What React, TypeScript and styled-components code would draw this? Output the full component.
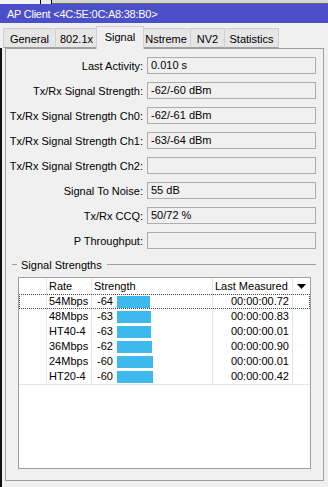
import styled, { createGlobalStyle } from "styled-components";

const GlobalStyle = createGlobalStyle`
  html, body {
    margin: 0;
    padding: 0;
    background: #f0f0f0;
  }
  body {
    font-family: "Liberation Sans", Arial, sans-serif;
    font-size: 11px;
    color: #000;
  }
`;

const tabs = [
  { name: "General", width: 53 },
  { name: "802.1x", width: 43 },
  { name: "Signal", width: 48 },
  { name: "Nstreme", width: 50 },
  { name: "NV2", width: 35 },
  { name: "Statistics", width: 55 },
];

const fields = [
  { label: "Last Activity:", value: "0.010 s" },
  { label: "Tx/Rx Signal Strength:", value: "-62/-60 dBm" },
  { label: "Tx/Rx Signal Strength Ch0:", value: "-62/-61 dBm" },
  { label: "Tx/Rx Signal Strength Ch1:", value: "-63/-64 dBm" },
  { label: "Tx/Rx Signal Strength Ch2:", value: "" },
  { label: "Signal To Noise:", value: "55 dB" },
  { label: "Tx/Rx CCQ:", value: "50/72 %" },
  { label: "P Throughput:", value: "" },
];

const rates = [
  { rate: "54Mbps", strength: -64, last: "00:00:00.72" },
  { rate: "48Mbps", strength: -63, last: "00:00:00.83" },
  { rate: "HT40-4", strength: -63, last: "00:00:00.01" },
  { rate: "36Mbps", strength: -62, last: "00:00:00.90" },
  { rate: "24Mbps", strength: -60, last: "00:00:00.01" },
  { rate: "HT20-4", strength: -60, last: "00:00:00.42" },
];

// bar length grows as the signal gets stronger
const barWidth = (dbm: number) => Math.round(33 + (dbm + 64) * 0.8);

const App = () => {
  return (
    <>
      <GlobalStyle />
      <Window>
        <TopStrip>
          <StripLight />
          <StripMark />
          <StripGap />
          <StripMark />
          <StripDark />
        </TopStrip>
        <TitleBar>AP Client &lt;4C:5E:0C:A8:38:B0&gt;</TitleBar>
        <TabRow>
          {tabs.map((t) => (
            <Tab key={t.name} $width={t.width} $active={t.name === "Signal"}>
              {t.name}
            </Tab>
          ))}
        </TabRow>
        <Body>
          <Edge />
          <Panel>
            <Form>
              {fields.map((f) => (
                <Field key={f.label}>
                  <Label>{f.label}</Label>
                  <Value>{f.value}</Value>
                </Field>
              ))}
            </Form>
            <GroupTitle>
              <Dash />
              <GroupText>Signal Strengths</GroupText>
              <GroupLine />
            </GroupTitle>
            <List>
              <HeaderRow>
                <Cell />
                <HeadCell>Rate</HeadCell>
                <HeadCell>Strength</HeadCell>
                <HeadCell>Last Measured</HeadCell>
                <ArrowCell>
                  <svg width="9" height="5" viewBox="0 0 9 5">
                    <polygon points="0,0 9,0 4.5,5" fill="#000" />
                  </svg>
                </ArrowCell>
              </HeaderRow>
              <Rows>
                {rates.map((r, i) => (
                  <Row key={r.rate} $focused={i === 0}>
                    <Cell />
                    <RateCell>{r.rate}</RateCell>
                    <StrengthCell>
                      <Dbm>{r.strength}</Dbm>
                      <Bar style={{ width: barWidth(r.strength) }} />
                    </StrengthCell>
                    <TimeCell>{r.last}</TimeCell>
                    <LastCell />
                  </Row>
                ))}
              </Rows>
            </List>
          </Panel>
        </Body>
      </Window>
    </>
  );
};

export default App;

const Window = styled.div`
  width: 328px;
  height: 487px;
  overflow: hidden;
  background: #f0f0f0;
`;

const TopStrip = styled.div`
  display: flex;
  height: 4px;
`;

const StripLight = styled.div`
  width: 40px;
  background: #f4f4f4;
`;

const StripMark = styled.div`
  width: 1px;
  background: #111;
`;

const StripGap = styled.div`
  width: 10px;
  background: #e8e8e8;
`;

const StripDark = styled.div`
  flex: 1;
  background: #d4d4d4;
  border-bottom: 1px solid #6a6a6a;
`;

const TitleBar = styled.div`
  height: 19px;
  display: flex;
  align-items: center;
  padding-left: 7px;
  background: #4c50c8;
  color: #fff;
  font-size: 11px;
  letter-spacing: -0.25px;
  white-space: nowrap;
`;

const TabRow = styled.div`
  height: 25px;
  display: flex;
  align-items: flex-end;
  padding-left: 3px;
  position: relative;
  z-index: 1;
`;

const Tab = styled.div<{ $active?: boolean; $width: number }>`
  box-sizing: border-box;
  width: ${(p) => p.$width}px;
  height: ${(p) => (p.$active ? "23px" : "20px")};
  margin: ${(p) => (p.$active ? "0 -2px -1px -2px" : "0 0 0 -1px")};
  padding-top: ${(p) => (p.$active ? "4px" : "4px")};
  text-align: center;
  border: 1px solid #cfcfcf;
  border-bottom: ${(p) => (p.$active ? "none" : "1px solid #a0a0a0")};
  background: ${(p) => (p.$active ? "#f0f0f0" : "#e6e6e6")};
  position: relative;
  z-index: ${(p) => (p.$active ? 2 : 1)};
  white-space: nowrap;
  &:first-child {
    margin-left: 0;
  }
`;

const Body = styled.div`
  display: flex;
  align-items: flex-start;
`;

const Edge = styled.div`
  width: 2px;
  height: 440px;
  background: #111;
  margin-right: 3px;
`;

const Panel = styled.div`
  box-sizing: border-box;
  width: 319px;
  height: 433px;
  border: 1px solid #a0a0a0;
  background: #f0f0f0;
`;

const Form = styled.div`
  display: flex;
  flex-direction: column;
  gap: 8px;
  padding-top: 8px;
`;

const Field = styled.div`
  display: grid;
  grid-template-columns: 137px 169px;
  column-gap: 4px;
  align-items: center;
`;

const Label = styled.span`
  text-align: right;
  white-space: nowrap;
`;

const Value = styled.div`
  box-sizing: border-box;
  height: 17px;
  line-height: 15px;
  padding-left: 3px;
  border: 1px solid #adadad;
  background: #f0f0f0;
`;

const GroupTitle = styled.div`
  display: flex;
  align-items: center;
  height: 13px;
  margin: 9px 7px 0 6px;
`;

const Dash = styled.div`
  width: 5px;
  height: 1px;
  background: #a0a0a0;
`;

const GroupText = styled.span`
  padding: 0 5px 0 4px;
`;

const GroupLine = styled.div`
  flex: 1;
  height: 1px;
  background: #a0a0a0;
`;

const List = styled.div`
  box-sizing: border-box;
  width: 293px;
  height: 192px;
  margin: 6px 0 0 12px;
  border: 1px solid #a0a0a0;
  background: #fff;
`;

const columns = "28px 45px 121px 80px 1fr";

const HeaderRow = styled.div`
  display: grid;
  grid-template-columns: ${columns};
  height: 16px;
  line-height: 16px;
`;

const Cell = styled.div`
  border-right: 1px solid #e5e5e5;
  white-space: nowrap;
  overflow: hidden;
`;

const HeadCell = styled(Cell)`
  padding-left: 2px;
`;

const ArrowCell = styled.div`
  display: flex;
  align-items: center;
  justify-content: center;
`;

const Rows = styled.div`
  border-bottom: 1px solid #e5e5e5;
`;

const Row = styled.div<{ $focused?: boolean }>`
  display: grid;
  grid-template-columns: ${columns};
  height: 15px;
  line-height: 15px;
  outline: ${(p) => (p.$focused ? "1px dotted #444" : "none")};
  outline-offset: -1px;
`;

const RateCell = styled(Cell)`
  padding-left: 2px;
`;

const StrengthCell = styled(Cell)`
  display: flex;
  align-items: center;
  padding-left: 5px;
`;

const Dbm = styled.span`
  width: 20px;
`;

const Bar = styled.div`
  height: 12px;
  background: #3db9ee;
`;

const TimeCell = styled(Cell)`
  text-align: right;
  padding-right: 3px;
`;

const LastCell = styled.div``;
